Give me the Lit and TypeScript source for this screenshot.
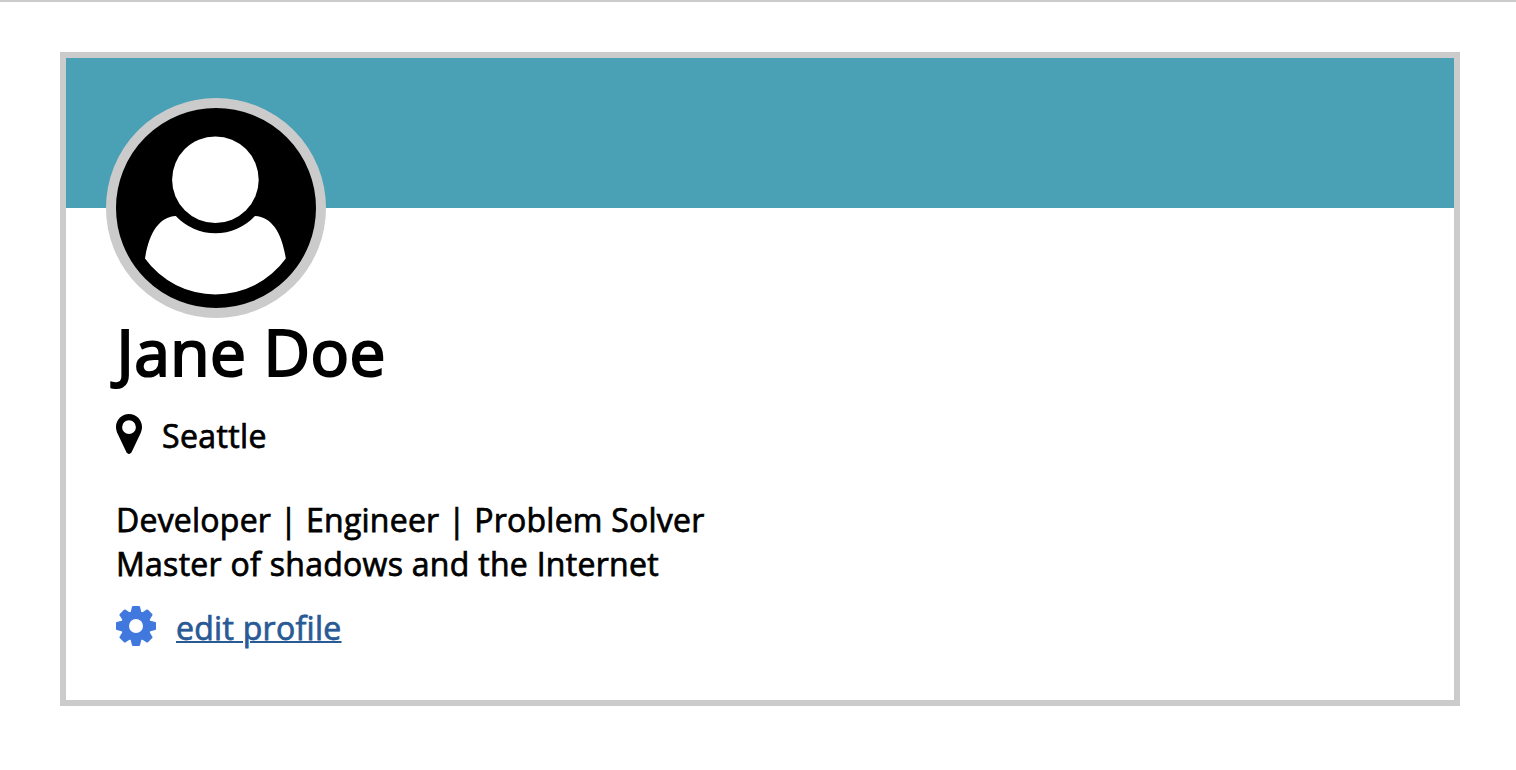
import { LitElement, html, css, svg } from "lit";
import { customElement } from "lit/decorators.js";

const TEETH = [0, 45, 90, 135, 180, 225, 270, 315];

@customElement("app-root")
export class AppRoot extends LitElement {
  static styles = css`
    :host {
      display: block;
      box-sizing: border-box;
      height: 770px;
      padding: 50px 56px 0 60px;
      border-top: 2px solid #cbcbcb;
      background: #fff;
      color: #000;
      font: 400 32px/44px "Open Sans", "Noto Sans", sans-serif;
    }
    .card {
      box-sizing: border-box;
      height: 654px;
      border: 6px solid #cbcbcb;
    }
    .banner {
      height: 150px;
      background: #4aa0b5;
    }
    .avatar {
      display: block;
      box-sizing: border-box;
      width: 220px;
      height: 220px;
      margin: -110px 0 0 40px;
      border: 10px solid #cbcbcb;
      border-radius: 50%;
      background: #000;
    }
    .details {
      display: flex;
      flex-direction: column;
      align-items: flex-start;
      padding-left: 50px;
      letter-spacing: 0.28px;
      -webkit-text-stroke: 0.75px currentColor;
    }
    .name {
      margin: -10px 0 0 0.5px;
      font-size: 64px;
      line-height: 88px;
      font-weight: 400;
      letter-spacing: 0.5px;
      -webkit-text-stroke: 2.2px currentColor;
    }
    .row {
      display: flex;
      align-items: flex-start;
    }
    .location {
      margin-top: 18px;
      gap: 20px;
      letter-spacing: 0.4px;
    }
    .pin {
      width: 26px;
      height: 40px;
    }
    .bio {
      margin: 40px 0 0;
    }
    .roles {
      letter-spacing: 0.23px;
    }
    .edit {
      margin-top: 20px;
      gap: 20px;
      color: #2a5a96;
    }
    .gear {
      width: 40px;
      height: 40px;
    }
    .link {
      color: inherit;
      text-decoration: underline;
      text-decoration-thickness: 2px;
    }
  `;

  render() {
    return html`
      <section class="card">
        <div class="banner"></div>
        <svg class="avatar" viewBox="0 0 200 200" fill="#fff">
          <circle cx="99.4" cy="71.7" r="43.3" />
          <path d="M59.8 108A54 54 0 0 0 139 108C156 109 166 125 169.8 150.5A86.8 86.8 0 0 1 29 150.5C33 125 43 109 59.8 108Z" />
        </svg>
        <div class="details">
          <h1 class="name">Jane Doe</h1>
          <div class="row location">
            <svg class="pin" viewBox="0 0 26 40">
              <path fill-rule="evenodd" d="M13 0C5.8 0 0 5.8 0 13C0 15.8.8 18 2 20.5L10.2 37.8C11.5 40.6 14.5 40.6 15.8 37.8L24 20.5C25.2 18 26 15.8 26 13C26 5.8 20.2 0 13 0ZM13 6.3A6.9 6.9 0 1 1 13 20.1A6.9 6.9 0 1 1 13 6.3Z" />
            </svg>
            <span>Seattle</span>
          </div>
          <p class="bio"><span class="roles">Developer | Engineer | Problem Solver</span><br />Master of shadows and the Internet</p>
          <div class="row edit">
            <svg class="gear" viewBox="-20 -20 40 40" fill="#4178de">
              <circle r="11" fill="none" stroke="#4178de" stroke-width="8" />
              ${TEETH.map(
                (angle) => svg`<path transform="rotate(${angle})" d="M-5.4 -13.5L-4 -19.2Q-3.8 -20 -3 -20H3Q3.8 -20 4 -19.2L5.4 -13.5Z" />`
              )}
            </svg>
            <a class="link" href="#">edit profile</a>
          </div>
        </div>
      </section>
    `;
  }
}
